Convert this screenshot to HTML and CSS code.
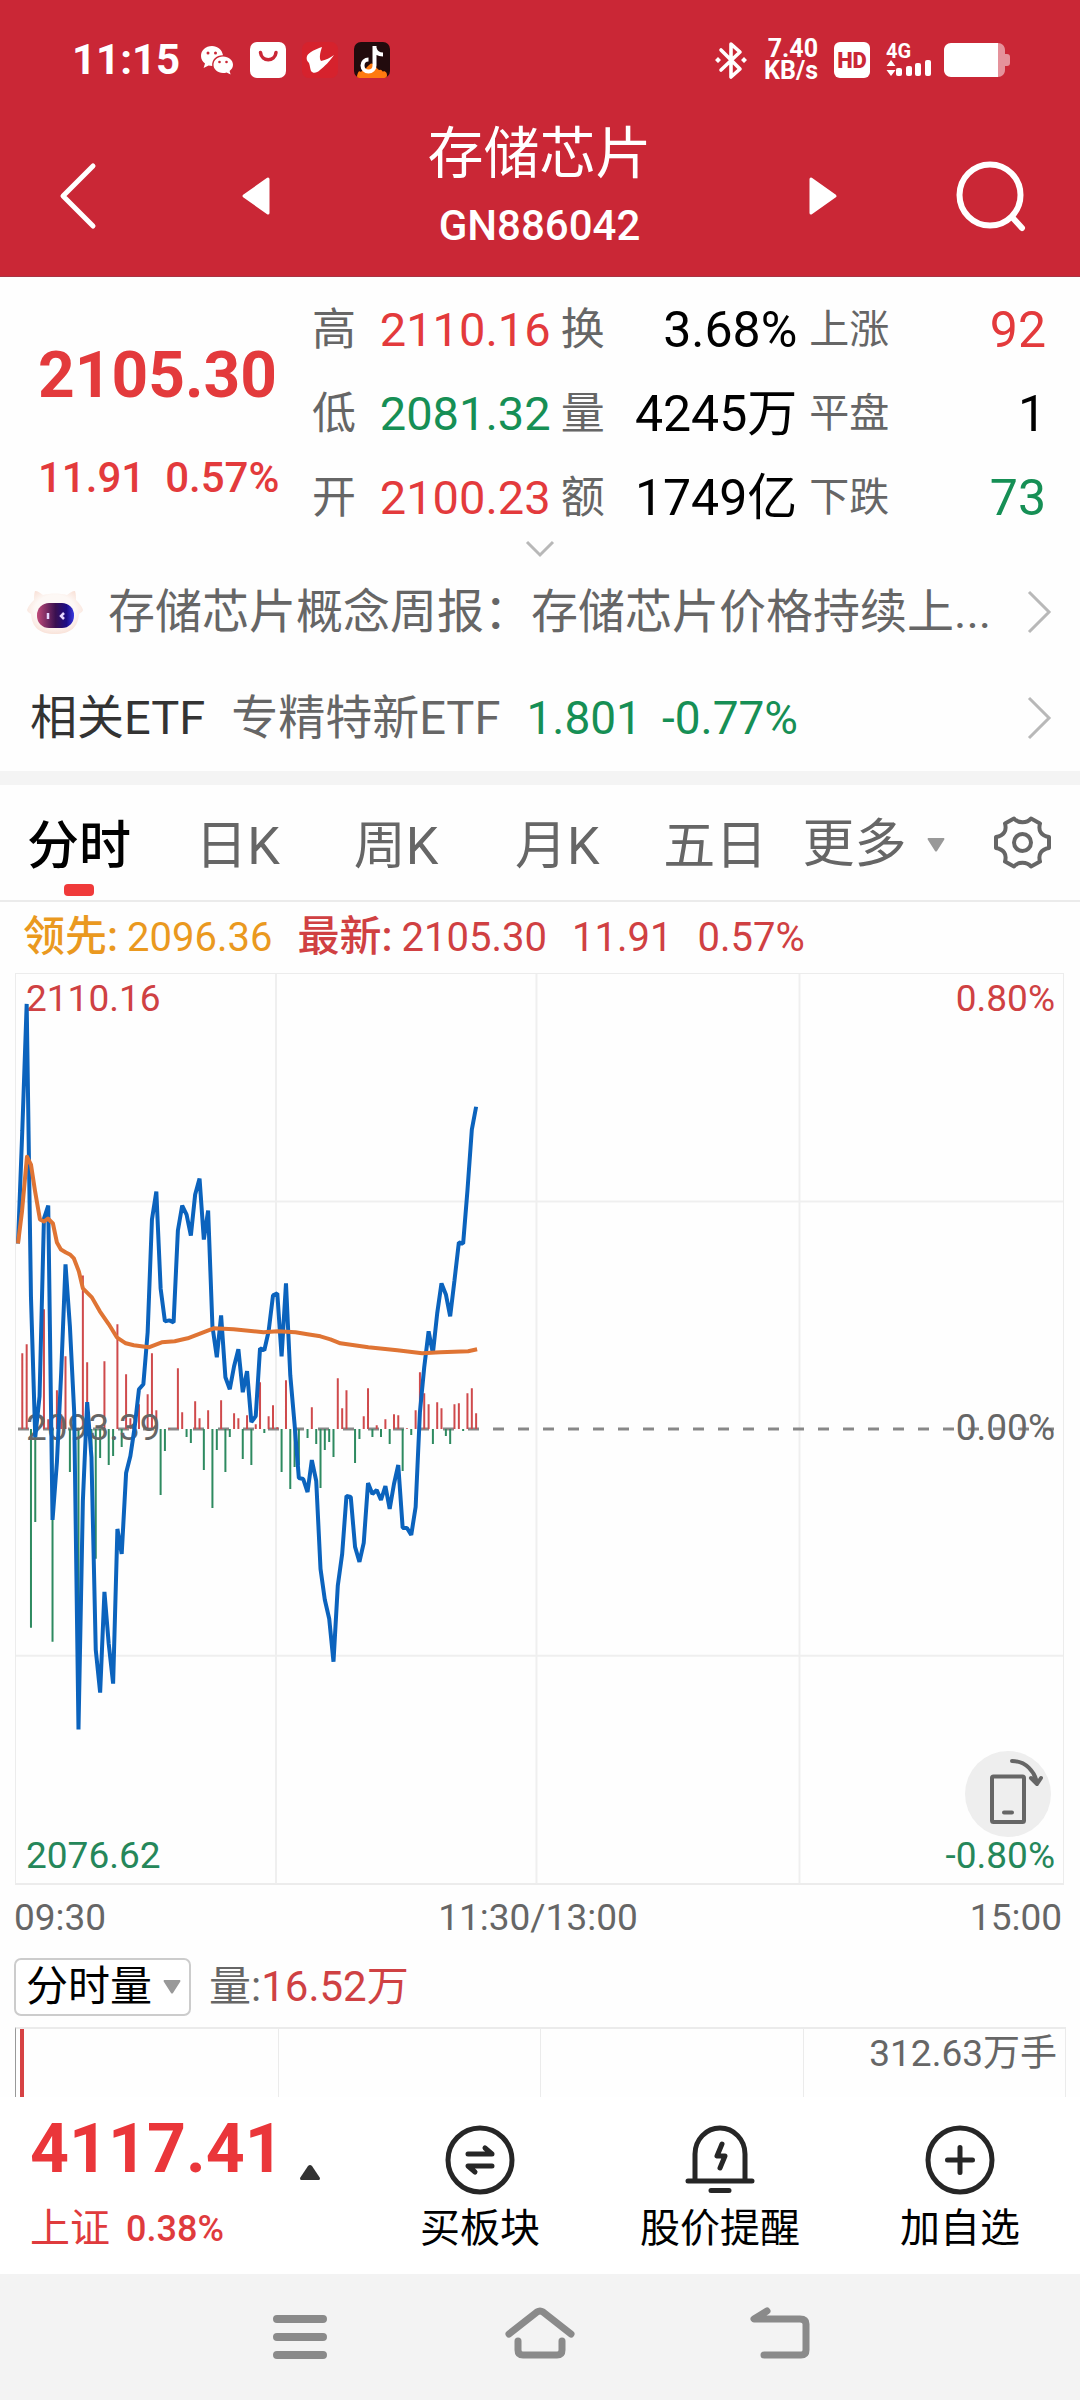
FILE: index.html
```html
<!DOCTYPE html>
<html lang="zh-CN">
<head>
<meta charset="utf-8">
<meta name="viewport" content="width=device-width, initial-scale=1">
<title>存储芯片 GN886042</title>
<link rel="stylesheet" href="styles.css">
</head>
<body>
<header class="top">
  <div class="status">
    <div class="status-left">
      <span class="clock">11:15</span>
      <svg class="ic-wechat" viewBox="0 0 34 30" width="34" height="30">
        <path fill="#fff" d="M12 1C5.400 1 1 5.500 1 11c0 3.300 1.600 5.800 4 7.600L3.600 23l5-2.400c1.200.3 2.400.4 3.600.4C11.500 14.500 16.500 10 23 10.200 22 4.500 17.500 1 12 1z"/>
        <path fill="#fff" d="M23 11.500c-5.500 0-9.500 3.800-9.500 8.300s4 8.200 9.500 8.200c1.300 0 2.500-.2 3.600-.6l4 2-1-3.500c2.200-1.500 3.400-3.700 3.400-6.100 0-4.500-4.200-8.300-10-8.300z"/>
        <g fill="#ca2736"><circle cx="8" cy="8" r="1.500"/><circle cx="15.500" cy="8" r="1.500"/><circle cx="19.500" cy="17" r="1.300"/><circle cx="26.500" cy="17" r="1.300"/></g>
      </svg>
      <svg viewBox="0 0 36 36" width="36" height="36">
        <rect width="36" height="36" rx="7" fill="#fff"/>
        <path d="M10.500 10.500c1 9.500 14.500 9.500 15.500 0" fill="none" stroke="#ca2736" stroke-width="3.500" stroke-linecap="round"/>
      </svg>
      <svg viewBox="0 0 36 36" width="36" height="36">
        <rect width="36" height="36" rx="7" fill="#d6222d"/>
        <path fill="#fff" d="M20 5C14 7 7 10 5 14c-1 3 0 5 2 7 1 3 1 5 2 8 2 3 6 2 9-1 5-4 9-8 14-15-4 3-8 5-13 6-2-3-1-8 1-14z"/>
      </svg>
      <svg viewBox="0 0 36 36" width="36" height="36">
        <rect width="36" height="36" rx="7" fill="#220b0d"/>
        <path fill="#ff7a10" d="M3 34c1-4 2-6 4-4 2-3 4-2 6-5 3-2 4-6 8-1 2 2 3 4 5 4 2-1 2 3 4 1 3 1 3 3 3 5-1 2-2 2-4 2H7c-2 0-4 0-4-2z"/>
        <path fill="none" stroke="#fff" stroke-width="4" d="M20.500 4v19.500a6 6 0 1 1-6-6M20.500 6c1 4 4 6.500 8.500 6.500"/>
      </svg>
    </div>
    <div class="status-right">
      <svg viewBox="0 0 34 38" width="34" height="38">
        <path d="M7 9l19 19-9 8V3l9 8L7 29" fill="none" stroke="#fff" stroke-width="3.600" stroke-linejoin="round" stroke-linecap="round"/>
        <path fill="#fff" d="M1 19l3-3 3 3-3 3zM27 19l3-3 3 3-3 3z"/>
      </svg>
      <div class="speed"><span>7.40</span><span>KB/s</span></div>
      <span class="hd">HD</span>
      <div class="signal">
        <span class="net">4G</span>
        <svg viewBox="0 0 46 18" width="46" height="18">
          <g fill="#fff"><path d="M5 1l4.500 6H.5zM5 17l4.500-6H.5z"/><rect x="10" y="9" width="6" height="8" rx="2"/><rect x="20" y="7" width="6" height="10" rx="2"/><rect x="29" y="4" width="6" height="13" rx="2"/><rect x="39" y="1" width="6" height="16" rx="2"/></g>
        </svg>
      </div>
      <svg class="battery" viewBox="0 0 66 34" width="66" height="34">
        <path fill="#e5929b" d="M50 0h4c4 0 7 3 7 7v4h2c2 0 3 1 3 3v6c0 2-1 3-3 3h-2v4c0 4-3 7-7 7h-4z"/>
        <path fill="#fff" d="M7 0h47v34H7c-4 0-7-3-7-7V7c0-4 3-7 7-7z"/>
      </svg>
    </div>
  </div>
  <div class="nav">
    <button class="icon-btn" aria-label="返回"><svg viewBox="0 0 36 66" width="36" height="66"><path d="M33 3L3 33l30 30" fill="none" stroke="#fff" stroke-width="5" stroke-linecap="round" stroke-linejoin="round"/></svg></button>
    <button class="icon-btn" aria-label="上一个"><svg viewBox="0 0 28 40" width="28" height="40"><path d="M26 3v34L2 20z" fill="#fff" stroke="#fff" stroke-width="3" stroke-linejoin="round"/></svg></button>
    <div class="title"><h1>存储芯片</h1><span>GN886042</span></div>
    <button class="icon-btn" aria-label="下一个"><svg viewBox="0 0 28 40" width="28" height="40"><path d="M2 3v34l24-17z" fill="#fff" stroke="#fff" stroke-width="3" stroke-linejoin="round"/></svg></button>
    <button class="icon-btn" aria-label="搜索"><svg viewBox="0 0 70 72" width="70" height="72"><circle cx="34" cy="35" r="30.500" fill="none" stroke="#fff" stroke-width="6"/><path d="M56 57l10 11" stroke="#fff" stroke-width="6" stroke-linecap="round"/></svg></button>
  </div>
</header>

<main>
  <section class="quote">
    <div class="price up">
      <strong>2105.30</strong>
      <div class="change"><span>11.91</span><span>0.57%</span></div>
    </div>
    <dl class="stats">
      <dt>高</dt><dd class="up">2110.16</dd><dt>换</dt><dd class="big">3.68%</dd><dt class="small">上涨</dt><dd class="big up">92</dd>
      <dt>低</dt><dd class="down">2081.32</dd><dt>量</dt><dd class="big">4245万</dd><dt class="small">平盘</dt><dd class="big">1</dd>
      <dt>开</dt><dd class="up">2100.23</dd><dt>额</dt><dd class="big">1749亿</dd><dt class="small">下跌</dt><dd class="big down">73</dd>
    </dl>
  </section>
  <button class="expand" aria-label="展开"><svg viewBox="0 0 30 18" width="30" height="18"><path d="M2 2l13 13L28 2" fill="none" stroke="#b8b8b8" stroke-width="3"/></svg></button>

  <a class="row" href="#news">
    <svg class="bot" viewBox="0 0 58 48" width="58" height="48">
      <defs>
        <linearGradient id="visor" x1="0" y1="0" x2="1" y2="0"><stop offset="0" stop-color="#c04a78"/><stop offset=".5" stop-color="#3a1050"/><stop offset=".8" stop-color="#1c0c86"/><stop offset="1" stop-color="#3a3ae0"/></linearGradient>
        <radialGradient id="face" cx=".5" cy=".45" r=".6"><stop offset=".6" stop-color="#fdf8f5"/><stop offset="1" stop-color="#f8ddd2"/></radialGradient>
      </defs>
      <path fill="url(#face)" d="M9 3c3 0 5 2 8 4 7-2 17-2 24 0 3-2 5-4 8-4 1 3 1 6 1 9 3 3 6 6 7 10-1 3-3 3-4 4-1 13-8 20-24 20S6 39 5 26c-1-1-3-1-4-4 1-4 4-7 7-10 0-3 0-6 1-9z"/>
      <rect x="11" y="15" width="37" height="25" rx="12" fill="url(#visor)"/>
      <path d="M22 25v6M38 25l-3 3 3 3" fill="none" stroke="#e6d8ff" stroke-width="2.500"/>
    </svg>
    <span class="headline">存储芯片概念周报：存储芯片价格持续上...</span>
    <svg class="go" viewBox="0 0 24 44" width="24" height="44"><path d="M2 2l20 20L2 42" fill="none" stroke="#b8b8b8" stroke-width="3"/></svg>
  </a>
  <a class="row etf" href="#etf">
    <span class="etf-label">相关ETF</span>
    <span class="etf-name">专精特新ETF</span>
    <span class="etf-num down">1.801</span>
    <span class="etf-num down">-0.77%</span>
    <svg class="go" viewBox="0 0 24 44" width="24" height="44"><path d="M2 2l20 20L2 42" fill="none" stroke="#b8b8b8" stroke-width="3"/></svg>
  </a>

  <nav class="tabs">
    <button class="tab active">分时</button>
    <button class="tab">日K</button>
    <button class="tab">周K</button>
    <button class="tab">月K</button>
    <button class="tab">五日</button>
    <button class="tab more">更多<svg viewBox="0 0 18 14" width="18" height="14"><path d="M1 0h16q1 1 0 2l-7 11q-1 1-2 0L1 2q-1-1 0-2z" fill="#999"/></svg></button>
    <button class="icon-btn" aria-label="设置">
      <svg viewBox="0 0 57 53" width="57" height="53"><g fill="none" stroke="#666" stroke-width="4" stroke-linejoin="round"><circle cx="28.500" cy="26.500" r="8.500"/><path d="M20 2.500c4 5 13 5 17 0l9 5c-2 7 1 12 9 13.500v11c-8 1.500-11 6.500-9 13.500l-9 5c-4-5-13-5-17 0l-9-5c2-7-1-12-9-13.500v-11C10 19.500 13 14.500 11 7.500z"/></g></svg>
    </button>
  </nav>

  <div class="legend">
    <span class="lead"><b>领先:</b>2096.36</span>
    <span class="last"><b>最新:</b>2105.30</span>
    <span class="last">11.91</span>
    <span class="last">0.57%</span>
  </div>

  <section class="chart">
    <svg class="plot" id="plot" viewBox="0 0 1049 911" preserveAspectRatio="none" aria-label="分时走势">
      <g class="grid-lines"><path d="M260.500 0v911M521.500 0v911M785 0v911M0 228h1049M0 683h1049"/></g>
      <path id="midline" d="M2 456H1049"/>
      <path id="buys"/>
      <path id="sells"/>
    </svg>
    <div class="scale">
      <div><span class="up2">2110.16</span><span class="up2">0.80%</span></div>
      <div><span>2093.39</span><span>0.00%</span></div>
      <div><span class="down2">2076.62</span><span class="down2">-0.80%</span></div>
    </div>
    <svg class="plot" viewBox="0 0 1049 911" preserveAspectRatio="none" aria-hidden="true">
      <path id="price"/>
      <path id="average"/>
    </svg>
    <button class="rotate" aria-label="横屏"><svg viewBox="0 0 86 86" width="86" height="86"><g fill="none" stroke="#666" stroke-width="4" stroke-linecap="round" stroke-linejoin="round"><rect x="27" y="25.500" width="32" height="45.500" rx="1.500"/><path d="M39 61.500h8M47 10c14 0 23 11 25 22M66 27l6 6 4-6"/></g></svg></button>
  </section>
  <div class="times"><span>09:30</span><span>11:30/13:00</span><span>15:00</span></div>

  <div class="indicator">
    <label class="picker"><select aria-label="指标"><option>分时量</option></select><svg viewBox="0 0 18 14" width="18" height="14"><path d="M1 0h16q1 1 0 2l-7 11q-1 1-2 0L1 2q-1-1 0-2z" fill="#999"/></svg></label>
    <span class="vol">量:<span class="up2">16.52万</span></span>
  </div>
  <section class="volume">
    <span class="first-bar"></span><span></span><span></span><span>312.63万手</span>
  </section>
</main>

<footer class="actions">
  <div class="index">
    <div class="index-top"><strong>4117.41</strong><svg viewBox="0 0 20 15" width="20" height="15"><path d="M10 0q1 0 2 1l8 12q0 2-1 2H1q-1 0-1-2L8 1q1-1 2-1z" fill="#333"/></svg></div>
    <div class="index-sub"><span>上证</span><span class="pct">0.38%</span></div>
  </div>
  <button class="action"><svg viewBox="0 0 72 72" width="72" height="72"><g fill="none" stroke="#262626" stroke-width="5" stroke-linecap="round" stroke-linejoin="round"><circle cx="36" cy="36" r="32"/><path d="M24 30h24l-7-6M48 42H24l7 6"/></g></svg>买板块</button>
  <button class="action"><svg viewBox="0 0 72 72" width="72" height="72"><g fill="none" stroke="#262626" stroke-width="5" stroke-linecap="round" stroke-linejoin="round"><path d="M11 56V30a25 26 0 0 1 50 0v26M4 57h64M27 66.500h18M38 20l-5 12h8l-5 12"/></g></svg>股价提醒</button>
  <button class="action"><svg viewBox="0 0 72 72" width="72" height="72"><g fill="none" stroke="#262626" stroke-width="5" stroke-linecap="round"><circle cx="36" cy="36" r="32"/><path d="M23.500 36h25M36 23.500v25"/></g></svg>加自选</button>
</footer>
<nav class="system">
  <button class="icon-btn" aria-label="最近任务"><svg viewBox="0 0 70 56" width="70" height="56"><path d="M12 9h46M12 27h46M12 45h46" stroke="#8a8a8a" stroke-width="8" stroke-linecap="round"/></svg></button>
  <button class="icon-btn" aria-label="主页"><svg viewBox="0 0 70 56" width="70" height="56"><path d="M4 24L32 2q3-2 6 0l28 22M13 31v9q0 5 5 5h34q5 0 5-5v-9" fill="none" stroke="#8a8a8a" stroke-width="7" stroke-linecap="round" stroke-linejoin="round"/></svg></button>
  <button class="icon-btn" aria-label="后退"><svg viewBox="0 0 70 56" width="70" height="56"><path d="M22 1L9 9h46q6 0 6 5v26q0 5-5 5H19" fill="none" stroke="#8a8a8a" stroke-width="7" stroke-linecap="round" stroke-linejoin="round"/></svg></button>
</nav>
<script src="chart.js"></script>
</body>
</html>
```

FILE: styles.css
```css
* { box-sizing: border-box; }
body {
  margin: 0;
  background: #fefefe;
  color: #000;
  font-family: Roboto, "Noto Sans CJK SC", sans-serif;
  font-size: 40px;
  line-height: 48px;
}
svg { display: block; flex: none; overflow: visible; }
button { border: 0; padding: 0; margin: 0; background: none; font: inherit; color: inherit; }
a { color: inherit; text-decoration: none; }
.up { color: #e33a3c; }
.down { color: #168f55; }
.up2 { color: #cf4143; }
.down2 { color: #25875a; }

/* header */
.top { background: #ca2736; color: #fff; padding-top: 36px; border-bottom: 1px solid #a83444; }
.status { display: flex; justify-content: space-between; align-items: center; height: 48px; padding: 0 70px 0 72px; }
.status-left, .status-right { display: flex; align-items: center; gap: 16px; }
.clock { font-size: 42px; font-weight: 700; margin-right: 4px; }
.speed { display: grid; justify-items: end; font-size: 25px; line-height: 22px; font-weight: 700; }
.hd { width: 36px; height: 36px; border-radius: 6px; background: #fff; color: #ca2736; font-size: 22px; line-height: 37px; font-weight: 900; text-align: center; }
.signal { display: flex; flex-direction: column; }
.net { font-size: 20px; line-height: 16px; font-weight: 700; }
.status-right .battery { margin-left: -4px; }
.nav { display: grid; grid-template-columns: 60px 36px 146px 28px 1fr 28px 119px 70px 54px; align-items: center; height: 192px; padding-top: 32px; }
.nav > :nth-child(1) { grid-column: 2; }
.nav > :nth-child(2) { grid-column: 4; }
.nav > :nth-child(3) { grid-column: 5; }
.nav > :nth-child(4) { grid-column: 6; }
.nav > :nth-child(5) { grid-column: 8; }
.icon-btn { display: flex; justify-content: center; align-items: center; }
.title { display: flex; flex-direction: column; align-items: center; gap: 16px; padding-bottom: 20px; }
.title h1 { margin: 0; font-size: 56px; line-height: 64px; font-weight: 400; }
.title span { font-size: 42px; font-weight: 500; }

/* quote */
.quote { display: flex; padding: 11px 34px 0 38px; }
.price { width: 274px; padding-top: 54px; }
.price strong { display: block; font-size: 64px; line-height: 68px; font-weight: 700; }
.change { display: flex; gap: 20px; margin-top: 44px; font-size: 42px; font-weight: 500; white-space: nowrap; }
.stats {
  flex: 1;
  display: grid;
  grid-template-columns: 44px 195fr 54px 193fr 92px 157fr;
  grid-auto-rows: 84px;
  align-items: center;
  margin: 0;
}
.stats dt { font-size: 44px; color: #666; text-align: right; }
.stats dt.small { font-size: 40px; }
.stats dd { margin: 0; font-size: 47px; text-align: right; }
.stats dd.big { font-size: 50px; }
.expand { display: flex; justify-content: center; width: 100%; height: 20px; }

.row { display: flex; align-items: center; height: 104px; padding: 0 29px 0 26px; color: #666; font-size: 47px; }
.headline { flex: 1; margin-left: 24px; white-space: nowrap; }
.etf { height: 107px; padding-left: 30px; }
.etf-label { color: #333; margin-right: 26px; }
.etf-name { margin-right: 26px; }
.etf-num { font-size: 46px; margin-right: 20px; }
.etf .go { margin-left: auto; }

/* period tabs */
.tabs {
  display: grid;
  grid-template-columns: 168fr 158fr 161fr 148fr 139fr 191fr 57px;
  align-items: center;
  height: 131px;
  padding: 0 29px 0 27px;
  border-top: 14px solid #f4f4f4;
  border-bottom: 2px solid #ebebeb;
}
.tab { justify-self: start; position: relative; font-size: 52px; line-height: 115px; color: #666; padding-top: 4px; height: 115px; }
.tab.active { color: #000; font-weight: 500; }
.tab.active::after { content: ""; position: absolute; left: calc(50% - 15px); bottom: 4px; width: 30px; height: 12px; border-radius: 4px; background: #f03a3a; }
.more { display: flex; align-items: center; gap: 20px; }

/* intraday chart */
.legend { display: flex; align-items: center; gap: 25px; height: 71px; padding-left: 23px; }
.legend b { font-size: 42px; font-weight: 500; margin-right: 9px; }
.lead { color: #ea991f; }
.last { color: #d04042; }
.chart { display: grid; position: relative; margin: 0 16px 0 15px; border: 1px solid #ececec; border-bottom-width: 2px; }
.chart > .plot, .chart > .scale { grid-area: 1 / 1; }
.plot { width: 100%; height: auto; aspect-ratio: 1049 / 911; fill: none; }
.plot path { vector-effect: non-scaling-stroke; }
.grid-lines { stroke: #efefef; stroke-width: 2; }
#midline { stroke: #888; stroke-width: 3; stroke-dasharray: 11 14; }
#buys { stroke: #cf4a4c; stroke-width: 2; }
#sells { stroke: #2e8a60; stroke-width: 2; }
#price { stroke: #0b63bd; stroke-width: 4; stroke-linejoin: bevel; }
#average { stroke: #df7434; stroke-width: 4; stroke-linejoin: round; }
.scale { display: flex; flex-direction: column; justify-content: space-between; padding: 2px 8px 4px 10px; font-size: 37px; line-height: 46px; color: #666; }
.scale div { display: flex; justify-content: space-between; }
.rotate { position: absolute; right: 12px; bottom: 46px; width: 86px; height: 86px; border-radius: 50%; background: #eee; }
.times { display: grid; grid-template-columns: 1fr auto 1fr; align-items: center; height: 66px; padding: 0 18px 0 14px; font-size: 37px; color: #666; }
.times span:last-child { text-align: right; }

/* volume */
.indicator { display: flex; align-items: center; gap: 18px; height: 76px; padding: 0 0 4px 14px; font-size: 42px; }
.picker { display: grid; align-items: center; }
.picker select { grid-area: 1 / 1; appearance: none; height: 58px; margin: 0; padding: 0 36px 0 10px; border: 2px solid #ccc; border-radius: 7px; background: #fff; font: inherit; line-height: 54px; color: #000; }
.picker svg { grid-area: 1 / 1; justify-self: end; margin-right: 10px; pointer-events: none; }
.vol { color: #666; }
.volume { display: grid; grid-template-columns: repeat(4, 1fr); height: 70px; margin: 0 14px 0 15px; border-top: 2px solid #ebebeb; border-left: 1px solid #999; font-size: 37px; line-height: 50px; color: #666; }
.volume span { border-right: 1px solid #ebebeb; text-align: right; padding-right: 8px; white-space: nowrap; }
.volume .first-bar::before { content: ""; display: block; width: 4px; height: 100%; margin-left: 4px; background: #d64244; }

/* bottom bars */
.actions { display: grid; grid-template-columns: 360fr 240fr 240fr 240fr; height: 177px; background: #fff; }
.index { padding: 20px 0 0 30px; color: #df3b3d; }
.index-top { display: flex; align-items: flex-end; gap: 16px; }
.index-top strong { font-size: 68px; line-height: 64px; font-weight: 700; color: #ea363a; }
.index-top svg { margin-bottom: 1px; }
.index-sub { display: flex; align-items: center; gap: 16px; margin-top: 24px; }
.pct { font-size: 36px; font-weight: 500; }
.action { display: flex; flex-direction: column; align-items: center; gap: 9px; padding-top: 27px; }
.system { display: grid; grid-template-columns: repeat(3, 240fr); align-items: start; height: 126px; padding: 36px 180px 0; background: #f3f3f3; }
```

FILE: chart.js
```js
// One entry per minute from 09:30; y is measured down from the top of the plot.
const STEP = 4.33;
const START = 2;
const MID = 456;

const price = [
  270, 157, 30, 324, 464, 423, 245, 232, 547, 489, 399, 291, 353, 439, 757, 528, 429, 484, 677, 720,
  619, 671, 711, 556, 581, 500, 483, 454, 416, 411, 359, 246, 218, 315, 348, 347, 349, 257, 232, 241,
  262, 221, 205, 266, 237, 353, 384, 342, 404, 416, 393, 376, 419, 398, 449, 443, 375, 377, 358, 322,
  320, 383, 310, 402, 451, 505, 506, 519, 487, 508, 596, 627, 646, 689, 613, 581, 523, 524, 574, 589,
  570, 510, 521, 517, 527, 513, 536, 511, 492, 555, 555, 562, 534, 439, 394, 358, 380, 340, 310, 321,
  343, 307, 269, 270, 217, 156, 133
];

// Leading index: [x, y] pairs.
const average = [
  [2, 270], [6, 238], [11, 183], [15, 191], [19, 217], [24, 246], [28, 248], [32, 245], [37, 250],
  [41, 269], [45, 276], [50, 279], [54, 281], [58, 285], [63, 298], [67, 315], [76, 324], [84, 338],
  [93, 351], [101, 364], [110, 370], [118, 372], [133, 374], [146, 369], [159, 368], [172, 365],
  [198, 355], [218, 356], [248, 359], [262, 358], [280, 359], [292, 361], [305, 363], [315, 366],
  [325, 370], [353, 374], [382, 377], [407, 380], [425, 379], [453, 378], [462, 376]
];

// Net strength per minute: above zero is buying, below is selling.
const strength = [
  0, 76, 85, -199, -93, 0, 120, 10, -213, 39, 15, 73, -43, 0, -235, 154, 67, -20, -130, -29,
  68, -36, -27, 105, -18, 55, 11, 0, 25, 0, 35, 76, 19, -66, -22, 1, 0, 61, 17, -8,
  -14, 28, 11, -41, 19, -79, -21, 29, -43, -8, 16, 11, -30, 14, -36, 5, 47, -4, 13, 24,
  2, -43, 49, -60, -38, -36, 0, -9, 22, -15, -59, -21, -13, -28, 51, 21, 39, 0, -34, -10,
  13, 41, -8, 4, -8, 10, -15, 15, 14, -42, 1, -6, 19, 57, 36, 25, -15, 27, 21, -7,
  -15, 25, 26, -2, 36, 41, 16
];

const x = i => (START + i * STEP).toFixed(1);
const line = points => "M" + points.map(p => p.join(" ")).join("L");
const bars = keep => strength
  .map((v, i) => (keep(v) ? `M${x(i)} ${MID}v${-v}` : ""))
  .join("");

document.getElementById("price").setAttribute("d", line(price.map((y, i) => [x(i), y])));
document.getElementById("average").setAttribute("d", line(average));
document.getElementById("buys").setAttribute("d", bars(v => v > 0));
document.getElementById("sells").setAttribute("d", bars(v => v < 0));
```
